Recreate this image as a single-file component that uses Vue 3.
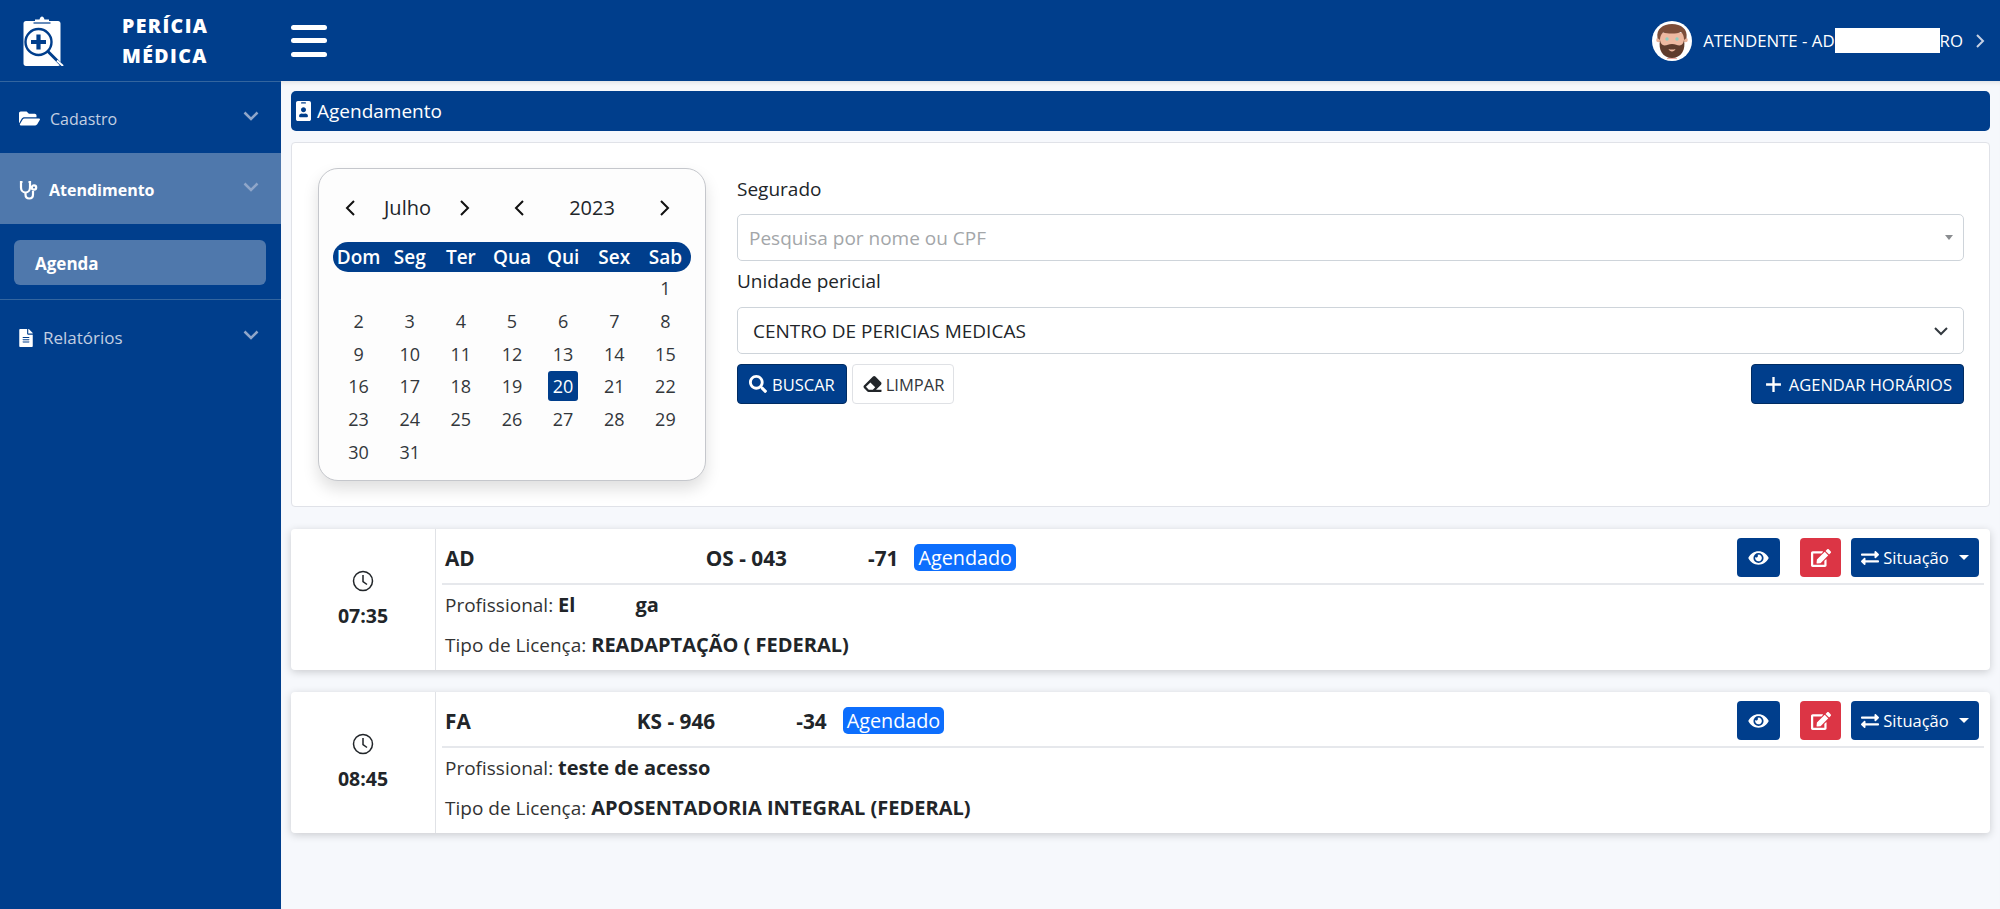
<script setup>
const weekDays = ['Dom', 'Seg', 'Ter', 'Qua', 'Qui', 'Sex', 'Sab']
const blanks = 6
const days = Array.from({ length: 31 }, (_, i) => i + 1)

const appointments = [
  {
    time: '07:35',
    parts: [['AD', 0], ['OS - 043', 231], ['-71', 81]],
    badgeGap: 16,
    professional: [['El', 0], ['ga', 60]],
    license: 'READAPTAÇÃO ( FEDERAL)'
  },
  {
    time: '08:45',
    parts: [['FA', 0], ['KS - 946', 166], ['-34', 81]],
    badgeGap: 16,
    professional: [['teste de acesso', 0]],
    license: 'APOSENTADORIA INTEGRAL (FEDERAL)'
  }
]
</script>

<template>
  <div class="page">
    <header class="topbar">
      <div class="brand">
        <svg class="logo" viewBox="0 0 44 50">
          <path fill="#fff" d="M3 5h9V3.500h4.500C17 1.500 18 .5 19 .5s2 1 2.500 3H26V5h9c1.500 0 2.500 1 2.500 2.500v40c0 1.500-1 2.500-2.500 2.500H3c-1.500 0-2.500-1-2.500-2.500v-40C.5 6 1.500 5 3 5z" />
          <path d="M10.500 7h17" stroke="#003e8c" stroke-width="1.200" />
          <circle cx="15.500" cy="26" r="13" fill="#fff" stroke="#003e8c" stroke-width="2.400" />
          <path d="M15.500 18.500v15M8 26h15" stroke="#003e8c" stroke-width="4.200" fill="none" />
          <path d="M25 35.500l13 13" stroke="#003e8c" stroke-width="3" />
          <path d="M34 44.500l6 5.500" stroke="#fff" stroke-width="2" />
        </svg>
        <div class="brand-name">PERÍCIA<br />MÉDICA</div>
      </div>
      <button class="burger"><span></span><span></span><span></span></button>
      <div class="user">
        <svg class="avatar" viewBox="0 0 40 40">
          <circle cx="20" cy="20" r="20" fill="#fff" />
          <circle cx="6.500" cy="19" r="2.300" fill="#e9b49c" />
          <circle cx="33.500" cy="19" r="2.300" fill="#e9b49c" />
          <path fill="#eeb9a1" d="M8 12h24v13c0 7-5 10-12 10S8 32 8 25z" />
          <path fill="#7d4e3a" d="M5.500 17C4 8 11 3 20 3s16 5 14.500 14l-2.500 2c0-3-.5-6-3-8-4 2-13 2-18 .5-2 1.500-3 4.500-3 7.500z" />
          <path fill="#5f3c2d" d="M8 19c.5 3 2 5.500 4.500 5.500 2.500 0 4-1.500 7.500-1.500s5 1.500 7.500 1.500c2.500 0 4-2.500 4.500-5.500 2 10-3 18-12 18S6 29 8 19z" />
          <path fill="#eeb9a1" d="M16.500 28c2 .8 5 .8 7 0-.5 1.600-2 2.500-3.500 2.500s-3-.9-3.500-2.500z" />
          <path d="M15 37.500h10" stroke="#e8a9a0" stroke-width="1" />
          <circle cx="15" cy="18" r="1.700" fill="#8fd0c0" />
          <circle cx="25" cy="18" r="1.700" fill="#8fd0c0" />
        </svg>
        <span class="user-name">ATENDENTE - AD<span class="redact"></span>RO</span>
        <svg class="user-arrow" viewBox="0 0 10 16"><path d="M2 2l6 6-6 6" /></svg>
      </div>
    </header>

    <div class="shell">
      <aside class="sidebar">
        <div class="nav-item">
          <svg class="nav-ico folder" viewBox="0 0 576 512"><path fill="currentColor" d="M572.694 292.093L500.27 416.248A63.997 63.997 0 0 1 444.989 448H45.025c-18.523 0-30.064-20.093-20.731-36.093l72.424-124.155A64 64 0 0 1 152 256h399.964c18.523 0 30.064 20.093 20.73 36.093zM152 224h328v-48c0-26.51-21.49-48-48-48H272l-64-64H48C21.49 64 0 85.49 0 112v278.046l69.077-118.418C86.214 242.25 117.989 224 152 224z" /></svg>
          <span class="nav-label">Cadastro</span>
          <svg class="chev" viewBox="0 0 16 10"><path d="M1.500 1.500L8 8l6.500-6.500" /></svg>
        </div>
        <div class="nav-item active">
          <svg class="nav-ico steth" viewBox="0 0 20 20" fill="none" stroke="#fff" stroke-width="2.200">
            <path d="M3.500 2H2v5.500c0 3 2 5 4.500 5s4.500-2 4.500-5V2H9.500" />
            <path d="M6.500 12.500v2c0 2.500 1.500 4 3.800 4s3.700-1.500 3.700-4V11" />
            <circle cx="15" cy="7.500" r="2.200" />
          </svg>
          <span class="nav-label">Atendimento</span>
          <svg class="chev" viewBox="0 0 16 10"><path d="M1.500 1.500L8 8l6.500-6.500" /></svg>
        </div>
        <div class="submenu">
          <div class="sub-pill">Agenda</div>
        </div>
        <div class="nav-item reports">
          <svg class="nav-ico file" viewBox="0 0 384 512"><path fill="currentColor" d="M224 136V0H24C10.700 0 0 10.700 0 24v464c0 13.300 10.700 24 24 24h336c13.300 0 24-10.700 24-24V160H248c-13.200 0-24-10.800-24-24zm64 236c0 6.600-5.400 12-12 12H108c-6.600 0-12-5.400-12-12v-8c0-6.600 5.400-12 12-12h168c6.600 0 12 5.400 12 12v8zm0-64c0 6.600-5.400 12-12 12H108c-6.600 0-12-5.400-12-12v-8c0-6.600 5.400-12 12-12h168c6.600 0 12 5.400 12 12v8zm0-72v8c0 6.600-5.400 12-12 12H108c-6.600 0-12-5.400-12-12v-8c0-6.600 5.400-12 12-12h168c6.600 0 12 5.400 12 12zm96-114.100v6.100H256V0h6.100c6.400 0 12.500 2.500 17 7l97.900 98c4.500 4.500 7 10.600 7 16.900z" /></svg>
          <span class="nav-label">Relatórios</span>
          <svg class="chev" viewBox="0 0 16 10"><path d="M1.500 1.500L8 8l6.500-6.500" /></svg>
        </div>
      </aside>

      <main class="content">
        <div class="title-bar">
          <svg class="title-ico" viewBox="0 0 384 512"><path fill="currentColor" d="M336 0H48C21.500 0 0 21.500 0 48v416c0 26.500 21.500 48 48 48h288c26.500 0 48-21.500 48-48V48c0-26.500-21.500-48-48-48zM144 32h96c8.800 0 16 7.200 16 16s-7.200 16-16 16h-96c-8.800 0-16-7.200-16-16s7.200-16 16-16zm48 128c35.300 0 64 28.700 64 64s-28.700 64-64 64-64-28.700-64-64 28.700-64 64-64zm112 236.800c0 10.600-10 19.200-22.400 19.200H102.400C90 416 80 407.400 80 396.800v-19.200c0-31.800 30.100-57.600 67.200-57.600h5c12.300 5.100 25.700 8 39.800 8s27.600-2.900 39.800-8h5c37.100 0 67.200 25.800 67.200 57.600v19.200z" /></svg>
          Agendamento
        </div>

        <section class="filter-card">
          <div class="calendar">
            <div class="cal-nav">
              <div class="cal-group month">
                <svg class="cal-arrow" viewBox="0 0 12 18"><path d="M10 2L3 9l7 7" /></svg>
                <span>Julho</span>
                <svg class="cal-arrow" viewBox="0 0 12 18"><path d="M2 2l7 7-7 7" /></svg>
              </div>
              <div class="cal-group year">
                <svg class="cal-arrow" viewBox="0 0 12 18"><path d="M10 2L3 9l7 7" /></svg>
                <span>2023</span>
                <svg class="cal-arrow" viewBox="0 0 12 18"><path d="M2 2l7 7-7 7" /></svg>
              </div>
            </div>
            <div class="cal-head">
              <span v-for="d in weekDays" :key="d">{{ d }}</span>
            </div>
            <div class="cal-grid">
              <span v-for="b in blanks" :key="'b' + b" class="cal-day"></span>
              <span v-for="d in days" :key="d" class="cal-day">
                <span :class="{ today: d === 20 }">{{ d }}</span>
              </span>
            </div>
          </div>

          <div class="filters">
            <label class="field-label first">Segurado</label>
            <div class="select search">
              <span class="placeholder">Pesquisa por nome ou CPF</span>
              <span class="caret"></span>
            </div>
            <label class="field-label second">Unidade pericial</label>
            <div class="select unit">
              <span>CENTRO DE PERICIAS MEDICAS</span>
              <svg class="select-chev" viewBox="0 0 16 10"><path d="M2 2l6 6 6-6" /></svg>
            </div>
            <div class="actions">
              <button class="btn primary">
                <svg class="btn-ico" viewBox="0 0 512 512"><path fill="currentColor" d="M505 442.700L405.300 343c-4.500-4.500-10.600-7-17-7H372c27.600-35.300 44-79.700 44-128C416 93.100 322.900 0 208 0S0 93.100 0 208s93.100 208 208 208c48.300 0 92.700-16.400 128-44v16.300c0 6.400 2.500 12.500 7 17l99.700 99.700c9.400 9.400 24.600 9.400 33.900 0l28.300-28.300c9.400-9.400 9.400-24.600.1-34zM208 336c-70.700 0-128-57.200-128-128 0-70.700 57.200-128 128-128 70.700 0 128 57.200 128 128 0 70.700-57.200 128-128 128z" /></svg>
                BUSCAR
              </button>
              <button class="btn light">
                <svg class="btn-ico eraser" viewBox="0 0 512 512"><path fill="currentColor" d="M497.941 273.941c18.745-18.745 18.745-49.137 0-67.882l-160-160c-18.745-18.745-49.136-18.746-67.883 0l-256 256c-18.745 18.745-18.745 49.137 0 67.882l96 96A48.004 48.004 0 0 0 144 480h356c6.627 0 12-5.373 12-12v-40c0-6.627-5.373-12-12-12H355.883l142.058-142.059zm-302.627-62.627l137.373 137.373L265.373 416H150.628l-80-80 124.686-124.686z" /></svg>
                LIMPAR
              </button>
              <button class="btn primary schedule">
                <svg class="btn-ico plus" viewBox="0 0 16 16"><path d="M8 1v14M1 8h14" /></svg>
                AGENDAR HORÁRIOS
              </button>
            </div>
          </div>
        </section>

        <article v-for="a in appointments" :key="a.time" class="appt">
          <div class="appt-time">
            <svg class="clock" viewBox="0 0 22 22"><circle cx="11" cy="11" r="9.500" /><path d="M11 5v6.500l4 3" /></svg>
            <strong>{{ a.time }}</strong>
          </div>
          <div class="appt-body">
            <div class="appt-head">
              <div class="appt-title">
                <b v-for="p in a.parts" :key="p[0]" :style="{ marginLeft: p[1] + 'px' }">{{ p[0] }}</b>
                <span class="badge" :style="{ marginLeft: a.badgeGap + 'px' }">Agendado</span>
              </div>
              <div class="appt-actions">
                <button class="icon-btn view">
                  <svg class="eye" viewBox="0 0 576 512"><path fill="currentColor" d="M572.520 241.400C518.290 135.590 410.930 64 288 64S57.680 135.640 3.480 241.410a32.350 32.350 0 0 0 0 29.190C57.710 376.410 165.070 448 288 448s230.320-71.640 284.520-177.410a32.350 32.350 0 0 0 0-29.190zM288 400a144 144 0 1 1 144-144 143.930 143.930 0 0 1-144 144zm0-240a95.310 95.310 0 0 0-25.310 3.790 47.850 47.850 0 0 1-66.900 66.900A95.780 95.780 0 1 0 288 160z" /></svg>
                </button>
                <button class="icon-btn edit">
                  <svg class="pen" viewBox="0 0 576 512"><path fill="currentColor" d="M402.600 83.200l90.200 90.200c3.800 3.800 3.800 10 0 13.800L274.400 405.600l-92.800 10.300c-12.400 1.400-22.900-9.100-21.500-21.500l10.300-92.800L388.800 83.200c3.800-3.800 10-3.800 13.800 0zm162-22.900l-48.800-48.800c-15.200-15.200-39.900-15.200-55.200 0l-35.400 35.400c-3.800 3.800-3.800 10 0 13.800l90.200 90.200c3.800 3.800 10 3.800 13.800 0l35.400-35.400c15.200-15.300 15.200-40 0-55.200zM384 346.200V448H64V128h229.800c3.200 0 6.200-1.300 8.500-3.500l40-40c7.600-7.600 2.200-20.500-8.500-20.500H48C21.500 64 0 85.500 0 112v352c0 26.500 21.500 48 48 48h352c26.500 0 48-21.500 48-48V306.200c0-10.700-12.900-16-20.500-8.500l-40 40c-2.200 2.300-3.500 5.300-3.500 8.500z" /></svg>
                </button>
                <button class="icon-btn status">
                  <svg class="swap" viewBox="0 0 512 512"><path fill="currentColor" d="M0 168v-16c0-13.255 10.745-24 24-24h360V80c0-21.367 25.899-32.042 40.971-16.971l80 80c9.372 9.373 9.372 24.569 0 33.941l-80 80C409.956 271.982 384 261.456 384 240v-48H24c-13.255 0-24-10.745-24-24zm488 152H128v-48c0-21.314-25.862-32.080-40.971-16.971l-80 80c-9.372 9.373-9.372 24.569 0 33.941l80 80C102.057 463.997 128 453.437 128 432v-48h360c13.255 0 24-10.745 24-24v-16c0-13.255-10.745-24-24-24z" /></svg>
                  Situação
                  <span class="drop"></span>
                </button>
              </div>
            </div>
            <div class="appt-line pro">
              Profissional:
              <b v-for="p in a.professional" :key="p[0]" :style="{ marginLeft: p[1] + 'px' }">{{ p[0] }}</b>
            </div>
            <div class="appt-line lic">Tipo de Licença: <b>{{ a.license }}</b></div>
          </div>
        </article>
      </main>
    </div>
  </div>
</template>

<style scoped>
.page {
  width: 2000px;
  height: 909px;
  display: flex;
  flex-direction: column;
  font-family: "Open Sans", "Noto Sans", sans-serif;
  color: #212529;
  background: #f6f8fc;
  overflow: hidden;
}

.topbar {
  height: 81px;
  flex: none;
  display: flex;
  align-items: center;
  background: #003e8c;
  color: #fff;
}

.brand {
  width: 281px;
  flex: none;
  display: flex;
  align-items: center;
  padding-left: 23px;
  box-sizing: border-box;
}

.logo {
  width: 44px;
  height: 50px;
}

.brand-name {
  margin-left: 55px;
  margin-top: 1px;
  font-size: 19.500px;
  font-weight: 800;
  line-height: 30px;
  letter-spacing: 1.400px;
}

.burger {
  width: 36px;
  height: 32px;
  margin-left: 10px;
  padding: 0;
  border: none;
  background: none;
  display: flex;
  flex-direction: column;
  justify-content: space-between;
}

.burger span {
  display: block;
  height: 5px;
  border-radius: 3px;
  background: #fff;
}

.user {
  margin-left: auto;
  margin-right: 15px;
  display: flex;
  align-items: center;
}

.avatar {
  width: 40px;
  height: 40px;
  margin-right: 11px;
}

.user-name {
  font-size: 16.800px;
  display: flex;
  align-items: center;
}

.redact {
  display: inline-block;
  width: 105px;
  height: 25px;
  background: #fff;
}

.user-arrow {
  width: 10px;
  height: 16px;
  margin-left: 12px;
  fill: none;
  stroke: #c5d0e3;
  stroke-width: 2;
}

.shell {
  flex: 1;
  display: flex;
  min-height: 0;
}

.sidebar {
  width: 281px;
  flex: none;
  background: #003e8c;
  border-top: 1px solid #33659f;
  box-sizing: border-box;
  color: #c3cfe2;
}

.nav-item {
  height: 71px;
  display: flex;
  align-items: center;
  padding: 2px 22px 0 19px;
  box-sizing: border-box;
  font-size: 16px;
}

.nav-item.active {
  height: 71px;
  background: #4f78ac;
  color: #fff;
  font-weight: 700;
}

.nav-label {
  margin-left: 10px;
}

.nav-ico {
  flex: none;
  color: #fff;
}

.folder {
  width: 21px;
  height: 19px;
}

.steth {
  width: 20px;
  height: 20px;
}

.file {
  width: 14px;
  height: 18px;
}

.chev {
  width: 16px;
  height: 10px;
  margin-left: auto;
  margin-top: -6px;
  fill: none;
  stroke: #8fa6c9;
  stroke-width: 2.500;
}

.submenu {
  height: 76px;
  padding: 16px 14px 0;
  box-sizing: border-box;
  border-bottom: 1px solid #33659f;
}

.sub-pill {
  width: 252px;
  height: 45px;
  line-height: 47px;
  padding-left: 21px;
  box-sizing: border-box;
  border-radius: 6px;
  background: #4f78ac;
  color: #fff;
  font-size: 17px;
  font-weight: 700;
}

.nav-item.reports {
  height: 75px;
  padding-top: 0;
  font-size: 17px;
}

.content {
  flex: 1;
  min-width: 0;
  padding: 10px 10px 0;
  box-shadow: inset 0 5px 5px -4px rgba(0, 0, 0, 0.12);
}

.title-bar {
  height: 40px;
  display: flex;
  align-items: center;
  padding-left: 5px;
  border-radius: 5px;
  background: #003e8c;
  color: #fff;
  font-size: 19px;
}

.title-ico {
  width: 15px;
  height: 20px;
  margin-right: 6px;
}

.filter-card {
  height: 365px;
  margin-top: 11px;
  padding: 25px 25px 0 26px;
  box-sizing: border-box;
  display: flex;
  background: #fff;
  border: 1px solid #e0e2e8;
  border-radius: 4px;
}

.calendar {
  width: 388px;
  height: 313px;
  flex: none;
  padding: 0 14px;
  box-sizing: border-box;
  background: #fdfdfd;
  border: 1px solid #c5c7cc;
  border-radius: 20px;
  box-shadow: 0 8px 16px rgba(0, 0, 0, 0.13);
}

.cal-nav {
  height: 73px;
  padding-top: 4px;
  box-sizing: border-box;
  display: flex;
  font-size: 20px;
  align-items: center;
}

.cal-group {
  display: flex;
  align-items: center;
  justify-content: space-between;
}

.month {
  width: 138px;
  padding-left: 11px;
  box-sizing: border-box;
}

.year {
  width: 158px;
  margin-left: 42px;
  box-sizing: border-box;
}

.cal-arrow {
  width: 12px;
  height: 18px;
  fill: none;
  stroke: #111;
  stroke-width: 2;
}

.cal-head {
  display: grid;
  grid-template-columns: repeat(7, 1fr);
  height: 30px;
  align-items: center;
  text-align: center;
  border-radius: 15px;
  background: #003e8c;
  color: #fff;
  font-size: 19px;
  font-weight: 600;
}

.cal-grid {
  display: grid;
  grid-template-columns: repeat(7, 1fr);
  grid-auto-rows: 32.700px;
  text-align: center;
  font-size: 18px;
  color: #33373b;
}

.cal-day {
  display: flex;
  align-items: center;
  justify-content: center;
}

.today {
  width: 30px;
  height: 30px;
  line-height: 30px;
  border-radius: 3px;
  background: #003e8c;
  color: #fff;
}

.filters {
  flex: 1;
  min-width: 0;
  margin-left: 31px;
}

.field-label {
  display: block;
  font-size: 19px;
  line-height: 24px;
}

.field-label.first {
  margin-top: 9px;
  margin-bottom: 13px;
}

.field-label.second {
  margin-top: 8px;
  margin-bottom: 14px;
}

.select {
  height: 47px;
  display: flex;
  align-items: center;
  padding-left: 11px;
  box-sizing: border-box;
  background: #fff;
  border: 1px solid #ced4da;
  border-radius: 5px;
  font-size: 19px;
}

.select.unit {
  padding-left: 15px;
}

.placeholder {
  color: #a3a6a9;
}

.caret {
  margin-left: auto;
  margin-right: 10px;
  border-left: 4px solid transparent;
  border-right: 4px solid transparent;
  border-top: 5px solid #8a8d90;
}

.select-chev {
  width: 16px;
  height: 10px;
  margin-left: auto;
  margin-right: 14px;
  fill: none;
  stroke: #343a40;
  stroke-width: 2;
}

.actions {
  display: flex;
  gap: 5px;
  margin-top: 10px;
}

.btn {
  height: 40px;
  display: inline-flex;
  align-items: center;
  padding: 0 11px;
  border-radius: 4px;
  font-family: inherit;
  font-size: 16.500px;
  box-sizing: border-box;
}

.btn.primary {
  background: #003e8c;
  border: 1px solid #002c63;
  color: #fff;
}

.btn.light {
  padding: 0 9px;
  background: #fff;
  border: 1px solid #dfe1e5;
  color: #33373b;
}

.btn.schedule {
  margin-left: auto;
  padding-left: 13px;
}

.btn-ico {
  width: 18px;
  height: 18px;
  margin-right: 5px;
}

.btn-ico.eraser {
  width: 21px;
  height: 18px;
  margin-right: 3px;
  color: #212529;
}

.btn-ico.plus {
  width: 17px;
  height: 17px;
  margin-right: 7px;
  fill: none;
  stroke: #fff;
  stroke-width: 2.200;
}

.appt {
  height: 141px;
  margin-top: 22px;
  display: flex;
  background: #fff;
  border-radius: 4px;
  box-shadow: 0 2px 8px rgba(0, 0, 0, 0.18);
}

.appt-time {
  width: 144px;
  flex: none;
  display: flex;
  flex-direction: column;
  align-items: center;
  justify-content: center;
  border-right: 1px solid #e0e2e6;
  font-size: 19.500px;
  color: #212529;
}

.clock {
  width: 22px;
  height: 22px;
  margin-bottom: 10px;
  fill: none;
  stroke: #212529;
  stroke-width: 1.500;
}

.appt-body {
  flex: 1;
  min-width: 0;
  padding: 0 6px;
}

.appt-head {
  height: 56px;
  padding-top: 3px;
  box-sizing: border-box;
  display: flex;
  align-items: center;
  border-bottom: 2px solid #e6e8ec;
  padding-left: 3px;
}

.appt-title {
  display: flex;
  align-items: center;
  font-size: 20.800px;
  white-space: nowrap;
}

.badge {
  height: 27px;
  line-height: 27px;
  padding: 0 4px;
  border-radius: 5px;
  background: #0d6efd;
  color: #fff;
  font-size: 19.800px;
}

.appt-actions {
  margin-left: auto;
  margin-right: 5px;
  display: flex;
  align-items: center;
}

.icon-btn {
  height: 39px;
  border: none;
  border-radius: 4px;
  display: inline-flex;
  align-items: center;
  justify-content: center;
  padding: 0;
  color: #fff;
  font-family: inherit;
  font-size: 16.500px;
}

.view {
  width: 43px;
  background: #003e8c;
}

.edit {
  width: 41px;
  margin-left: 20px;
  background: #dc3545;
}

.status {
  width: 128px;
  margin-left: 10px;
  background: #003e8c;
}

.eye {
  width: 21px;
  height: 18px;
}

.pen {
  width: 20px;
  height: 18px;
}

.swap {
  width: 18px;
  height: 18px;
  margin-right: 4px;
}

.drop {
  margin-left: 10px;
  border-left: 5px solid transparent;
  border-right: 5px solid transparent;
  border-top: 5px solid #fff;
}

.appt-line {
  padding-left: 3px;
  font-size: 19px;
  color: #333;
}

.appt-line b {
  color: #212529;
  font-size: 20px;
}

.appt-line.pro {
  margin-top: 8px;
  line-height: 24px;
}

.appt-line.lic {
  margin-top: 16px;
  line-height: 24px;
}

b {
  font-weight: 700;
}
</style>

<style>
html,
body {
  margin: 0;
  background: #f6f8fc;
}
</style>
